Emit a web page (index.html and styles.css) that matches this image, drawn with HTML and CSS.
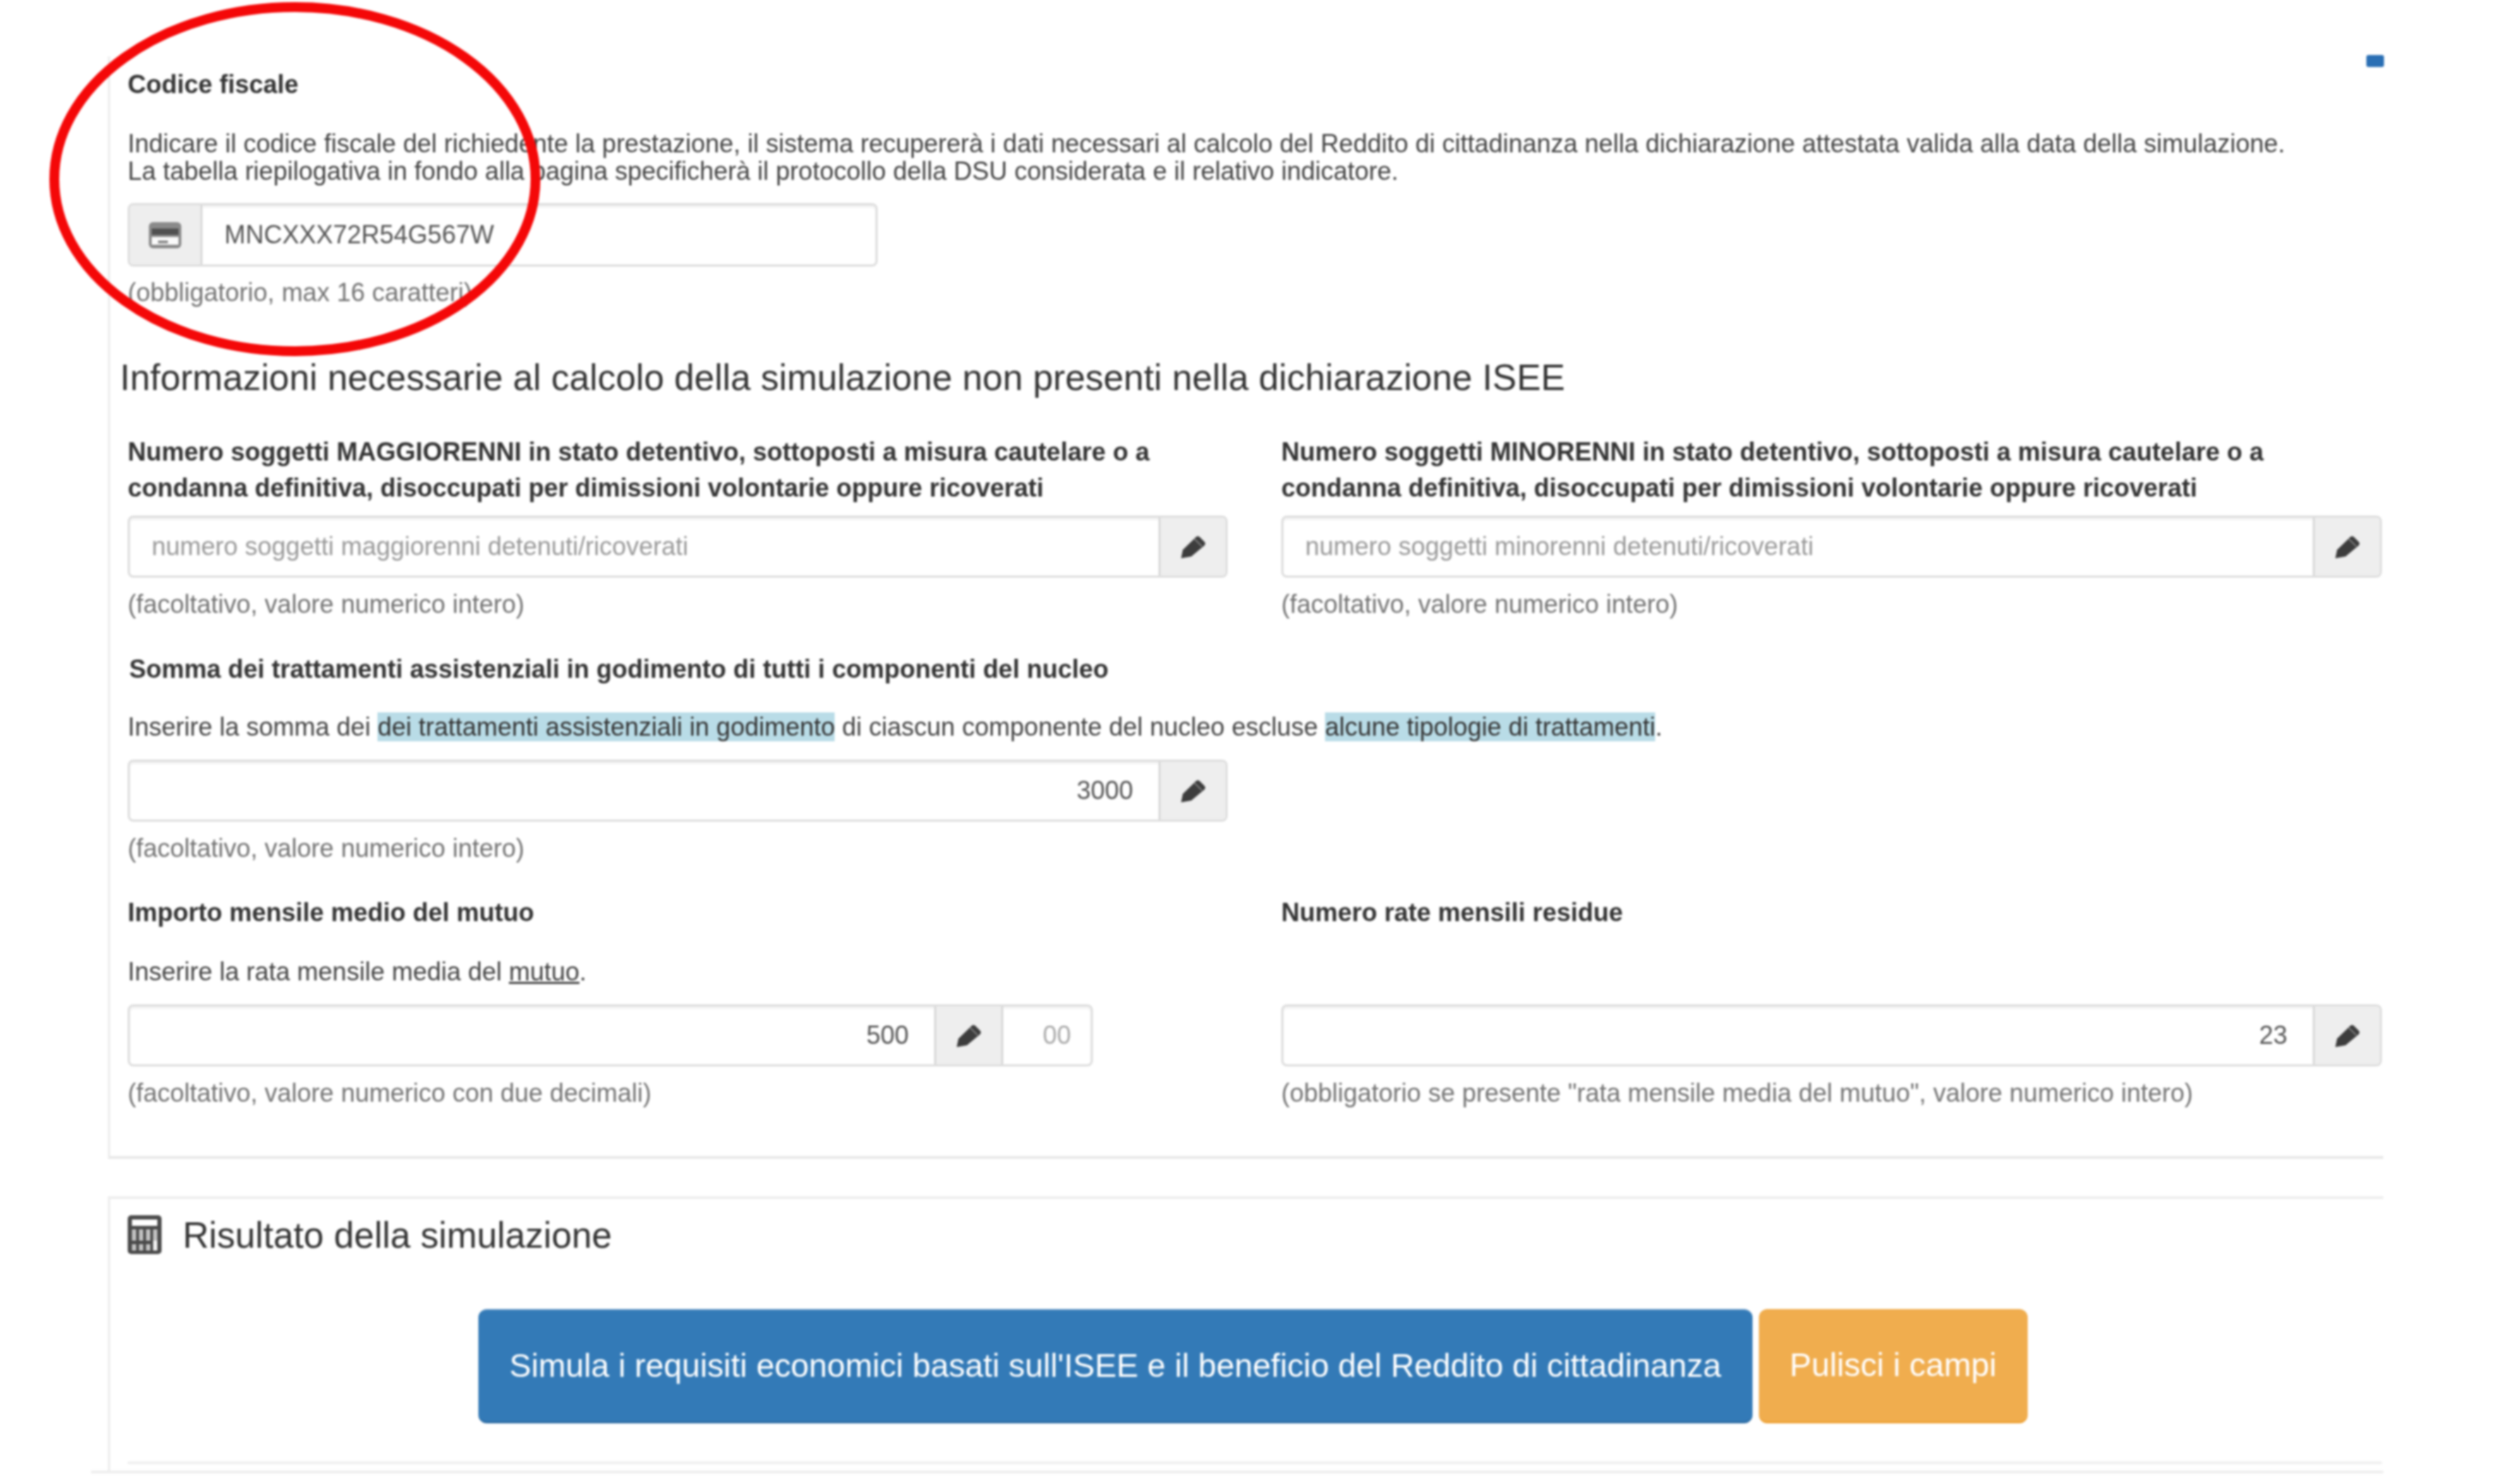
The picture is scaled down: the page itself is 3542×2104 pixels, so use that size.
FILE: index.html
```html
<!DOCTYPE html>
<html lang="it">
<head>
<meta charset="utf-8">
<title>Simulazione Reddito di cittadinanza</title>
<link rel="stylesheet" href="styles.css">
</head>
<body>
<svg class="sprites" aria-hidden="true">
  <symbol id="pencil" viewBox="0 0 38 36">
    <path d="M2 34.5L4.5 22.5 23 4.5a4 4 0 0 1 5.500 0l6.500 6.500a4 4 0 0 1 0 5.500L16.500 32z" fill="#3d3d3d"/>
    <path d="M21 7l10.500 10.500" stroke="#8d8d8d" stroke-width="1.600" fill="none"/>
  </symbol>
</svg>
<main class="page">
  <section class="panel panel-form">
    <h4 class="label label-cf">Codice fiscale</h4>
    <p class="intro">Indicare il codice fiscale del richiedente la prestazione, il sistema recupererà i dati necessari al calcolo del Reddito di cittadinanza nella dichiarazione attestata valida alla data della simulazione.<br>La tabella riepilogativa in fondo alla pagina specificherà il protocollo della DSU considerata e il relativo indicatore.</p>
    <div class="group group-cf">
      <span class="addon addon-left"><svg class="icon-card" viewBox="0 0 46 37"><rect width="46" height="37" rx="6" fill="#8a8a8a"/><rect x="4" y="9" width="38" height="9" fill="#505050"/><rect x="4" y="21" width="38" height="11" fill="#fafafa"/><rect x="13" y="26" width="14" height="4" fill="#8a8a8a"/></svg></span>
      <span class="control control-value">MNCXXX72R54G567W</span>
    </div>
    <p class="help help-cf">(obbligatorio, max 16 caratteri)</p>

    <h3 class="section-title">Informazioni necessarie al calcolo della simulazione non presenti nella dichiarazione ISEE</h3>

    <div class="columns columns-a">
      <div class="field">
        <label class="field-label">Numero soggetti MAGGIORENNI in stato detentivo, sottoposti a misura cautelare o a condanna definitiva, disoccupati per dimissioni volontarie oppure ricoverati</label>
        <div class="group">
          <span class="control control-placeholder">numero soggetti maggiorenni detenuti/ricoverati</span>
          <span class="addon addon-right"><svg class="icon-pencil"><use href="#pencil"/></svg></span>
        </div>
        <p class="help">(facoltativo, valore numerico intero)</p>
      </div>
      <div class="field">
        <label class="field-label">Numero soggetti MINORENNI in stato detentivo, sottoposti a misura cautelare o a condanna definitiva, disoccupati per dimissioni volontarie oppure ricoverati</label>
        <div class="group">
          <span class="control control-placeholder">numero soggetti minorenni detenuti/ricoverati</span>
          <span class="addon addon-right"><svg class="icon-pencil"><use href="#pencil"/></svg></span>
        </div>
        <p class="help">(facoltativo, valore numerico intero)</p>
      </div>
    </div>

    <h4 class="label label-somma">Somma dei trattamenti assistenziali in godimento di tutti i componenti del nucleo</h4>
    <p class="desc desc-somma">Inserire la somma dei <mark class="hl">dei trattamenti assistenziali in godimento</mark> di ciascun componente del nucleo escluse <mark class="hl">alcune tipologie di trattamenti</mark>.</p>
    <div class="columns">
      <div class="field">
        <div class="group group-tight">
          <span class="control control-number">3000</span>
          <span class="addon addon-right"><svg class="icon-pencil"><use href="#pencil"/></svg></span>
        </div>
        <p class="help">(facoltativo, valore numerico intero)</p>
      </div>
    </div>

    <div class="columns columns-d">
      <div class="field">
        <h4 class="label">Importo mensile medio del mutuo</h4>
        <p class="desc">Inserire la rata mensile media del <span class="term">mutuo</span>.</p>
        <div class="group group-mortgage">
          <span class="control control-number">500</span>
          <span class="addon addon-mid"><svg class="icon-pencil"><use href="#pencil"/></svg></span>
          <span class="cents">00</span>
        </div>
        <p class="help">(facoltativo, valore numerico con due decimali)</p>
      </div>
      <div class="field">
        <h4 class="label">Numero rate mensili residue</h4>
        <div class="group group-bottom">
          <span class="control control-number">23</span>
          <span class="addon addon-right"><svg class="icon-pencil"><use href="#pencil"/></svg></span>
        </div>
        <p class="help">(obbligatorio se presente "rata mensile media del mutuo", valore numerico intero)</p>
      </div>
    </div>
  </section>

  <section class="panel panel-result">
    <h3 class="result-title">
      <svg class="icon-calc" viewBox="0 0 48 55">
        <rect width="48" height="55" rx="5" fill="#4a4a4a"/>
        <rect x="6" y="6" width="36" height="9" fill="#ffffff"/>
        <g fill="#c2c2c2">
          <rect x="6" y="20" width="6" height="16"/>
          <rect x="16" y="20" width="6" height="16"/>
          <rect x="26" y="20" width="6" height="16"/>
          <rect x="36" y="20" width="6" height="16"/>
          <rect x="6" y="41" width="6" height="9"/>
          <rect x="16" y="41" width="6" height="9"/>
          <rect x="26" y="41" width="6" height="9"/>
        </g>
        <rect x="36" y="36" width="6" height="14" fill="#f2f2f2"/>
      </svg>
      <span>Risultato della simulazione</span>
    </h3>
    <div class="actions">
      <button class="btn btn-primary" type="button">Simula i requisiti economici basati sull'ISEE e il beneficio del Reddito di cittadinanza</button>
      <button class="btn btn-warning" type="button">Pulisci i campi</button>
    </div>
    <div class="inner-rule"></div>
  </section>
  <div class="bottom-rule"></div>

  <div class="marker"></div>
  <svg class="circle" viewBox="0 0 720 520"><ellipse cx="359" cy="254" rx="341" ry="244" fill="none" stroke="#f40808" stroke-width="14"/></svg>
</main>
</body>
</html>
```

FILE: styles.css
```css
* { box-sizing: border-box; }
html, body { margin: 0; padding: 0; background: #fff; }
body { font-family: "Liberation Sans", Arial, sans-serif; font-size: 36px; color: #333; }

.sprites { display: none; }

.page {
  position: relative;
  width: 3542px;
  height: 2104px;
  overflow: hidden;
  background: #fff;
  padding-top: 80px;
  filter: blur(1.4px);
}

.panel {
  margin-left: 153px;
  width: 3225px;
  border-left: 3px solid #ececec;
  padding-left: 25px;
}
.panel-form {
  height: 1563px;
  padding-top: 18px;
  border-bottom: 4px solid #e8e8e8;
}
.panel-result {
  height: 389px;
  margin-top: 53px;
  border-top: 4px solid #eeeeee;
  padding-top: 23px;
}

h3, h4, p { margin: 0; font-weight: normal; }

.label {
  font-weight: bold;
  line-height: 44px;
  color: #333;
  white-space: nowrap;
}
.intro {
  margin-top: 42px;
  line-height: 39px;
  color: #444;
  white-space: nowrap;
}
.desc {
  margin-top: 38px;
  line-height: 48px;
  color: #444;
  white-space: nowrap;
}
.desc-somma { margin-top: 36px; }
.hl { background: #b9dce7; color: #333; }
.term { text-decoration: underline; }

.group {
  display: flex;
  height: 88px;
  margin-top: 14px;
  border: 3px solid #dddddd;
  border-radius: 8px;
  background: #fff;
  box-shadow: inset 0 3px 3px rgba(0, 0, 0, .06);
  overflow: hidden;
}
.group-cf { width: 1063px; height: 90px; margin-top: 26px; }
.group-tight { margin-top: 22px; }
.group-mortgage { width: 1368px; margin-top: 22px; }
.group-bottom { margin-top: auto; }

.addon {
  display: flex;
  align-items: center;
  justify-content: center;
  background: #eeeeee;
  flex: none;
}
.addon-left { width: 103px; border-right: 3px solid #d8d8d8; }
.addon-right { width: 95px; border-left: 3px solid #d8d8d8; }
.addon-mid { width: 98px; border-left: 3px solid #d8d8d8; border-right: 3px solid #d8d8d8; }

.control {
  flex: 1;
  display: flex;
  align-items: center;
  min-width: 0;
  white-space: nowrap;
  color: #555;
  padding: 0 31px;
}
.control-placeholder { color: #999; }
.control-number { justify-content: flex-end; padding-right: 36px; }
.cents {
  flex: none;
  width: 124px;
  display: flex;
  align-items: center;
  justify-content: flex-end;
  padding-right: 28px;
  color: #aaa;
}

.icon-card { width: 46px; height: 37px; }
.icon-pencil { width: 38px; height: 36px; }
.icon-calc { width: 48px; height: 55px; flex: none; }

.help {
  margin-top: 18px;
  line-height: 40px;
  color: #737373;
  white-space: nowrap;
}
.help-cf { margin-top: 17px; }

.section-title {
  margin: 70px 0 0 -11px;
  font-size: 51.4px;
  line-height: 60px;
  color: #333;
  white-space: nowrap;
}

.columns {
  display: grid;
  grid-template-columns: 1559px 1560px;
  column-gap: 76px;
}
.columns-a { margin-top: 50px; }
.columns-d { margin-top: 49px; }

.label-somma { margin: 50px 0 0 2px; }
.field { display: flex; flex-direction: column; min-width: 0; }
.field-label { font-weight: bold; line-height: 51px; color: #333; }

.result-title {
  display: flex;
  align-items: center;
  gap: 30px;
  font-size: 51.4px;
  line-height: 54px;
  color: #333;
}

.actions {
  display: flex;
  gap: 9px;
  margin: 78px 0 0 497px;
}
.btn {
  height: 162px;
  padding: 0 44px 2px;
  border: 0;
  border-radius: 12px;
  font: 46.3px "Liberation Sans", Arial, sans-serif;
  color: #fff;
  white-space: nowrap;
}
.btn-primary { background: #337ab7; border-top: 2px solid #5b93c4; border-bottom: 3px solid #2e6da4; }
.btn-warning { background: #f0ad4e; border-bottom: 3px solid #eea236; }

.inner-rule {
  height: 4px;
  width: 3195px;
  margin-top: 54px;
  background: #f0f0f0;
}
.bottom-rule {
  height: 4px;
  width: 3249px;
  margin-left: 129px;
  background: #eeeeee;
}

.marker {
  position: absolute;
  left: 3354px;
  top: 78px;
  width: 25px;
  height: 17px;
  border-radius: 3px;
  background: #2a6fb4;
}
.circle {
  position: absolute;
  left: 59px;
  top: 0;
  width: 720px;
  height: 520px;
}
```
